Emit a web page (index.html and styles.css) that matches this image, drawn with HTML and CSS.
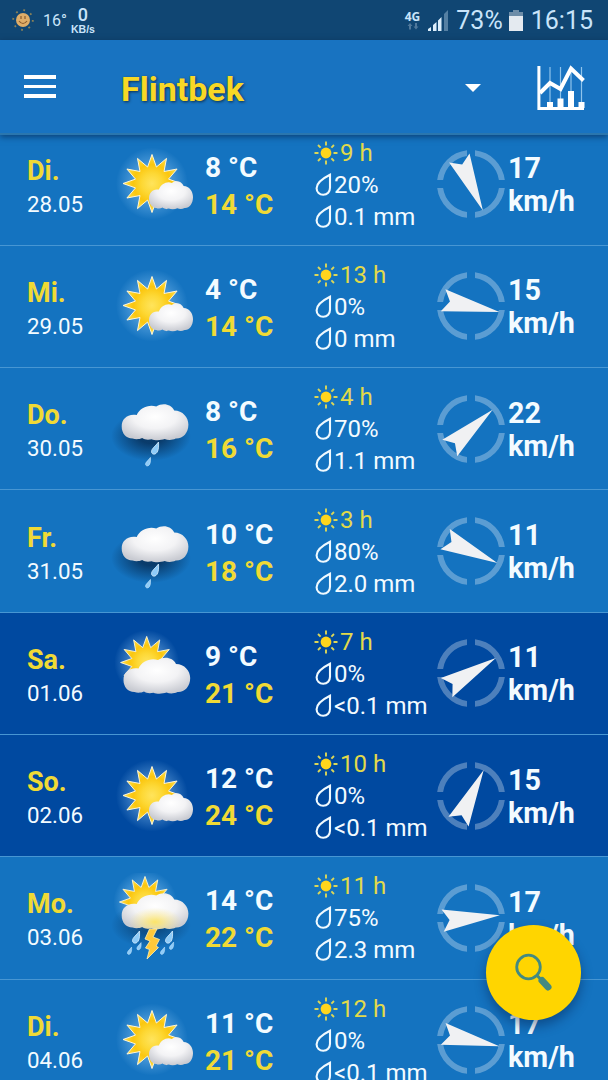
FILE: index.html
```html
<!DOCTYPE html>
<html lang="de">

<head>
    <meta charset="UTF-8">
    <meta name="viewport" content="width=device-width, initial-scale=1.0">
    <title>Flintbek</title>
    <link rel="stylesheet" href="styles.css">
</head>

<body>
    <!-- Shared icon shapes -->
    <svg class="defs" width="0" height="0" aria-hidden="true">
        <defs>
            <radialGradient id="sun-fill">
                <stop offset="0" stop-color="#ffe45c" />
                <stop offset="0.35" stop-color="#fdd835" />
                <stop offset="0.65" stop-color="#fbc60e" />
                <stop offset="1" stop-color="#ffe04a" />
            </radialGradient>
            <radialGradient id="glow-fill">
                <stop offset="0.5" stop-color="#9fd4ff" stop-opacity="0.4" />
                <stop offset="1" stop-color="#9fd4ff" stop-opacity="0" />
            </radialGradient>
            <radialGradient id="cloud-fill" cx="0.5" cy="0.35" r="0.65">
                <stop offset="0" stop-color="#ffffff" />
                <stop offset="0.5" stop-color="#f3f3f5" />
                <stop offset="1" stop-color="#c9cbd2" />
            </radialGradient>
            <radialGradient id="storm-fill" cx="0.5" cy="0.8" r="0.4">
                <stop offset="0" stop-color="#ffe55a" stop-opacity="0.9" />
                <stop offset="1" stop-color="#ffe98a" stop-opacity="0" />
            </radialGradient>
            <radialGradient id="shade-fill">
                <stop offset="0.3" stop-color="#06294f" stop-opacity="0.75" />
                <stop offset="1" stop-color="#06294f" stop-opacity="0" />
            </radialGradient>
            <g id="sun">
                <circle r="36" fill="url(#glow-fill)" />
                <polygon fill="url(#sun-fill)" stroke="#fff6d8" stroke-width="1"
                    points="29,0 16.5,4.4 25.1,14.5 12,12 14.5,25.1 4.4,16.5 0,29 -4.4,16.5 -14.5,25.1 -12,12 -25.1,14.5 -16.5,4.4 -29,0 -16.5,-4.4 -25.1,-14.5 -12,-12 -14.5,-25.1 -4.4,-16.5 0,-29 4.4,-16.5 14.5,-25.1 12,-12 25.1,-14.5 16.5,-4.4" />
            </g>
            <path id="cloud"
                d="M11,34.5 C4,34.5 0,29 0,22.5 C0,15 5.5,9.5 15,11 C18,4 27,0 34.5,2.5 C41,-1.5 49.5,0 52.5,6.5 C61,6.5 66.7,13.5 66.7,20.5 C66.7,29 61,35 54,34.6 C50,36.5 46,36.3 43,35 C39,36.5 33,36.5 30,35.2 C27,36 23,36 20.5,34 C17.5,35.5 13.5,35.5 11,34.5 Z" />
            <path id="drop" fill="#8ecbf8" stroke="#d5eeff" stroke-width="0.8"
                d="M3.5,-6.5 C3.8,-1 3.5,4 0,5.5 C-2.5,6.3 -4.5,4 -3,1.2 C-1.5,-1.5 1.5,-3.5 3.5,-6.5 Z" />
            <path id="ring-part" d="M4,-33.8 A34,34 0 0 1 33.8,-4 L27.9,-4 A28.2,28.2 0 0 0 4,-27.9 Z" />
            <path id="arrow" d="M29,0 L-28.5,-11.2 L-21.5,0 L-28.5,11.2 Z" />
            <symbol id="partly" viewBox="0 0 90 90">
                <use href="#sun" x="41" y="44.5" />
                <g transform="translate(38 42) scale(0.66 0.78)">
                    <use href="#cloud" fill="url(#cloud-fill)" />
                </g>
            </symbol>
            <symbol id="cloudy" viewBox="0 0 90 90">
                <g transform="translate(35.7 34.5) scale(0.9)">
                    <use href="#sun" />
                </g>
                <use href="#cloud" x="12.5" y="29.5" fill="url(#cloud-fill)" />
            </symbol>
            <symbol id="rain" viewBox="0 0 90 90">
                <ellipse cx="40" cy="52" rx="40" ry="25" fill="url(#shade-fill)" />
                <use href="#cloud" x="10.7" y="20" fill="url(#cloud-fill)" />
                <use href="#drop" x="44" y="64.5" />
                <g transform="translate(37 78) scale(0.7)">
                    <use href="#drop" />
                </g>
            </symbol>
            <symbol id="storm" viewBox="0 0 90 90">
                <g transform="translate(34 29) scale(0.88)">
                    <use href="#sun" />
                </g>
                <ellipse cx="40" cy="52" rx="40" ry="23" fill="url(#shade-fill)" opacity="0.7" />
                <use href="#cloud" x="10.7" y="20" fill="url(#cloud-fill)" />
                <use href="#cloud" x="10.7" y="20" fill="url(#storm-fill)" />
                <path fill="#ffc93a" stroke="#fff0b0" stroke-width="0.8"
                    d="M38.5,56 L46,56 L42,64 L48.5,66.5 L45,73 L47.5,74.5 L36,86 L38.5,76.5 L34.5,75 L39,68 L34,66 Z" />
                <use href="#drop" x="25" y="64.5" />
                <use href="#drop" x="58" y="64.5" />
                <g transform="translate(18.5 78) scale(0.6)">
                    <use href="#drop" />
                </g>
                <g transform="translate(28 73.5) scale(0.6)">
                    <use href="#drop" />
                </g>
                <g transform="translate(51.5 78) scale(0.6)">
                    <use href="#drop" />
                </g>
                <g transform="translate(60.5 73) scale(0.6)">
                    <use href="#drop" />
                </g>
            </symbol>
            <symbol id="ring" viewBox="-34 -34 68 68">
                <use href="#ring-part" />
                <use href="#ring-part" transform="rotate(90)" />
                <use href="#ring-part" transform="rotate(180)" />
                <use href="#ring-part" transform="rotate(270)" />
            </symbol>
            <symbol id="sun-small" viewBox="-12 -12 24 24">
                <circle r="5.4" fill="#ffd51c" />
                <path stroke="#dcd758" stroke-width="1.9"
                    d="M0,-7.5V-11.5M0,7.5V11.5M-7.5,0H-11.5M7.5,0H11.5M-5.4,-5.4L-8,-8M5.4,-5.4L8,-8M-5.4,5.4L-8,8M5.4,5.4L8,8" />
            </symbol>
            <symbol id="water" viewBox="0 0 18 24">
                <path fill="none" stroke="#f0faff" stroke-width="2.1"
                    d="M15,1.8 C9,4.8 1.6,9.5 1.6,15.2 C1.6,19.2 4.6,21.8 8.2,21.8 C12.4,21.8 15,18.8 15,14.8 Z" />
            </symbol>
        </defs>
    </svg>

    <div class="status-bar">
        <svg class="status-sun" viewBox="-12 -12 24 24">
            <circle r="9.8" fill="none" stroke="#8a8158" stroke-width="1.8" stroke-dasharray="1.8 5.9" />
            <circle r="7" fill="#dfad68" />
            <path d="M-2,-4V-1M2,-4V-1M-4,1Q0,6 4,1" fill="none" stroke="#8a5a2c" stroke-width="1.2" />
        </svg>
        <span class="status-temp">16°</span>
        <span class="status-net"><b>0</b><span>KB/s</span></span>
        <span class="status-4g">4G
            <svg viewBox="0 0 12 7">
                <path d="M3,0L5.5,3H4V6.5H2V3H0.5ZM9,6.5L6.5,3.5H8V0H10V3.5H11.5Z" fill="#50789b" />
            </svg>
        </span>
        <svg class="status-signal" viewBox="0 0 20 21">
            <path d="M0,21V19L3,17V21ZM5,21V15L8.5,12V21ZM10,21V10.5L13.5,7V21Z" fill="#dceefb" />
            <path d="M16,21V4L20,0V21Z" fill="#5580a3" />
        </svg>
        <span class="status-text">73%</span>
        <svg class="status-battery" viewBox="0 0 14 21">
            <path d="M0,2H4V0H10V2H14V6H0Z" fill="#6d8da8" />
            <path d="M0,6H14V21H0Z" fill="#e4eaf0" />
        </svg>
        <span class="status-text">16:15</span>
    </div>

    <header class="app-bar">
        <button class="menu-button" aria-label="Menü"><span></span><span></span><span></span></button>
        <h1>Flintbek</h1>
        <div class="arrow-down"></div>
        <svg class="chart-icon" viewBox="0 0 48 46">
            <path d="M13,2V38M23.5,2V36M34,5V38M44.5,2V38" stroke="#8fc4ec" stroke-width="1.2" />
            <path d="M1.9,1V43.5H47" fill="none" stroke="#fff" stroke-width="3" />
            <path d="M3,28L13,18L23.5,24L34,3.5L46.5,15.5" fill="none" stroke="#fff" stroke-width="4" />
            <path d="M10,37H16V43H10ZM20.5,33.5H26.5V43H20.5ZM31,26H37V43H31ZM41.5,37H47.5V43H41.5Z" fill="#fff" />
        </svg>
    </header>

    <main class="forecast">
        <section class="day">
            <div class="date"><b>Di.</b><span>28.05</span></div>
            <svg class="weather"><use href="#partly" /></svg>
            <div class="temp"><span>8 °C</span><span class="max">14 °C</span></div>
            <ul class="details">
                <li class="sunshine"><svg><use href="#sun-small" /></svg>9 h</li>
                <li><svg><use href="#water" /></svg>20%</li>
                <li><svg><use href="#water" /></svg>0.1 mm</li>
            </ul>
            <svg class="compass" viewBox="-34 -34 68 68">
                <use class="ring" href="#ring" x="-34" y="-34" width="68" height="68" />
                <use href="#arrow" transform="rotate(65.8)" />
            </svg>
            <div class="wind">17<br>km/h</div>
        </section>

        <section class="day">
            <div class="date"><b>Mi.</b><span>29.05</span></div>
            <svg class="weather"><use href="#partly" /></svg>
            <div class="temp"><span>4 °C</span><span class="max">14 °C</span></div>
            <ul class="details">
                <li class="sunshine"><svg><use href="#sun-small" /></svg>13 h</li>
                <li><svg><use href="#water" /></svg>0%</li>
                <li><svg><use href="#water" /></svg>0 mm</li>
            </ul>
            <svg class="compass" viewBox="-34 -34 68 68">
                <use class="ring" href="#ring" x="-34" y="-34" width="68" height="68" />
                <use href="#arrow" transform="rotate(11.8)" />
            </svg>
            <div class="wind">15<br>km/h</div>
        </section>

        <section class="day">
            <div class="date"><b>Do.</b><span>30.05</span></div>
            <svg class="weather"><use href="#rain" /></svg>
            <div class="temp"><span>8 °C</span><span class="max">16 °C</span></div>
            <ul class="details">
                <li class="sunshine"><svg><use href="#sun-small" /></svg>4 h</li>
                <li><svg><use href="#water" /></svg>70%</li>
                <li><svg><use href="#water" /></svg>1.1 mm</li>
            </ul>
            <svg class="compass" viewBox="-34 -34 68 68">
                <use class="ring" href="#ring" x="-34" y="-34" width="68" height="68" />
                <use href="#arrow" transform="rotate(-41.8)" />
            </svg>
            <div class="wind">22<br>km/h</div>
        </section>

        <section class="day">
            <div class="date"><b>Fr.</b><span>31.05</span></div>
            <svg class="weather"><use href="#rain" /></svg>
            <div class="temp"><span>10 °C</span><span class="max">18 °C</span></div>
            <ul class="details">
                <li class="sunshine"><svg><use href="#sun-small" /></svg>3 h</li>
                <li><svg><use href="#water" /></svg>80%</li>
                <li><svg><use href="#water" /></svg>2.0 mm</li>
            </ul>
            <svg class="compass" viewBox="-34 -34 68 68">
                <use class="ring" href="#ring" x="-34" y="-34" width="68" height="68" />
                <use href="#arrow" transform="rotate(24.6)" />
            </svg>
            <div class="wind">11<br>km/h</div>
        </section>

        <section class="day weekend">
            <div class="date"><b>Sa.</b><span>01.06</span></div>
            <svg class="weather"><use href="#cloudy" /></svg>
            <div class="temp"><span>9 °C</span><span class="max">21 °C</span></div>
            <ul class="details">
                <li class="sunshine"><svg><use href="#sun-small" /></svg>7 h</li>
                <li><svg><use href="#water" /></svg>0%</li>
                <li><svg><use href="#water" /></svg>&lt;0.1 mm</li>
            </ul>
            <svg class="compass" viewBox="-34 -34 68 68">
                <use class="ring" href="#ring" x="-34" y="-34" width="68" height="68" />
                <use href="#arrow" transform="rotate(-31)" />
            </svg>
            <div class="wind">11<br>km/h</div>
        </section>

        <section class="day weekend">
            <div class="date"><b>So.</b><span>02.06</span></div>
            <svg class="weather"><use href="#partly" /></svg>
            <div class="temp"><span>12 °C</span><span class="max">24 °C</span></div>
            <ul class="details">
                <li class="sunshine"><svg><use href="#sun-small" /></svg>10 h</li>
                <li><svg><use href="#water" /></svg>0%</li>
                <li><svg><use href="#water" /></svg>&lt;0.1 mm</li>
            </ul>
            <svg class="compass" viewBox="-34 -34 68 68">
                <use class="ring" href="#ring" x="-34" y="-34" width="68" height="68" />
                <use href="#arrow" transform="rotate(-64)" />
            </svg>
            <div class="wind">15<br>km/h</div>
        </section>

        <section class="day">
            <div class="date"><b>Mo.</b><span>03.06</span></div>
            <svg class="weather"><use href="#storm" /></svg>
            <div class="temp"><span>14 °C</span><span class="max">22 °C</span></div>
            <ul class="details">
                <li class="sunshine"><svg><use href="#sun-small" /></svg>11 h</li>
                <li><svg><use href="#water" /></svg>75%</li>
                <li><svg><use href="#water" /></svg>2.3 mm</li>
            </ul>
            <svg class="compass" viewBox="-34 -34 68 68">
                <use class="ring" href="#ring" x="-34" y="-34" width="68" height="68" />
                <use href="#arrow" transform="rotate(-5.4)" />
            </svg>
            <div class="wind">17<br>km/h</div>
        </section>

        <section class="day">
            <div class="date"><b>Di.</b><span>04.06</span></div>
            <svg class="weather"><use href="#partly" /></svg>
            <div class="temp"><span>11 °C</span><span class="max">21 °C</span></div>
            <ul class="details">
                <li class="sunshine"><svg><use href="#sun-small" /></svg>12 h</li>
                <li><svg><use href="#water" /></svg>0%</li>
                <li><svg><use href="#water" /></svg>&lt;0.1 mm</li>
            </ul>
            <svg class="compass" viewBox="-34 -34 68 68">
                <use class="ring" href="#ring" x="-34" y="-34" width="68" height="68" />
                <use href="#arrow" transform="rotate(12.4)" />
            </svg>
            <div class="wind">17<br>km/h</div>
        </section>
    </main>

    <button class="search-button" aria-label="Suche">
        <svg viewBox="0 0 40 40">
            <circle cx="14.5" cy="14" r="11.8" fill="none" stroke="#438a80" stroke-width="2.8" />
            <path d="M22.5,22L27,26.5" stroke="#438a80" stroke-width="3" />
            <path d="M28,27.5L34,34" stroke="#438a80" stroke-width="7" stroke-linecap="round" />
        </svg>
    </button>
</body>

</html>
```
FILE: styles.css
```css
body {
    position: relative;
    height: 1080px;
    margin: 0;
    overflow: hidden;
    background-color: #1473c0;
    color: #f3fbff;
    font-family: Roboto, "Liberation Sans", sans-serif;
}

button {
    padding: 0;
    border: 0;
    background: none;
}

.defs {
    position: absolute;
}

.status-bar {
    box-sizing: border-box;
    display: flex;
    align-items: center;
    height: 40px;
    padding: 0 15px 0 11px;
    background-color: #104673;
    color: #c9e4fa;
}

.status-sun {
    width: 24px;
    height: 24px;
}

.status-temp {
    width: 28px;
    margin-left: 8px;
    padding-top: 1px;
    font-size: 16px;
}

.status-net {
    display: flex;
    flex-direction: column;
    align-items: center;
    font-family: "Liberation Sans", sans-serif;
    font-size: 10.5px;
    font-weight: bold;
    line-height: 10px;
}

.status-net b {
    font-family: Roboto, sans-serif;
    font-size: 18px;
    font-weight: 500;
    line-height: 18px;
}

.status-4g {
    display: flex;
    flex-direction: column;
    align-items: center;
    margin-left: auto;
    font-family: "Open Sans", sans-serif;
    font-size: 12px;
    font-weight: bold;
    line-height: 13px;
}

.status-4g svg {
    width: 12px;
    height: 7px;
}

.status-signal {
    width: 20px;
    height: 21px;
    margin: 0 8px;
}

.status-text {
    padding-top: 1px;
    font-size: 25px;
}

.status-battery {
    width: 14px;
    height: 21px;
    margin: 0 8px 0 6px;
}

.app-bar {
    /* Keeps the bar above the list that scrolls under it */
    position: relative;
    z-index: 1;
    box-sizing: border-box;
    display: flex;
    align-items: center;
    height: 95px;
    padding: 0 23px 0 24px;
    border-bottom: 2px solid #2a76ae;
    background-color: #1873c1;
    box-shadow: 0 2px 6px rgba(0, 20, 50, 0.5);
}

.menu-button {
    display: flex;
    flex-direction: column;
    gap: 6px;
}

.menu-button span {
    width: 32px;
    height: 3.5px;
    background-color: #fff;
}

.app-bar h1 {
    margin: 4px 0 0 65px;
    color: #f8d825;
    font-size: 34px;
    font-weight: bold;
    text-shadow: 1px 1px 3px rgba(0, 0, 0, 0.6);
}

.arrow-down {
    margin: 2px 0 0 auto;
    border: 8px solid;
    border-bottom-width: 0;
    border-color: #fff transparent transparent;
}

.chart-icon {
    width: 48px;
    height: 46px;
    margin: 3px 0 0 56px;
}

.forecast {
    /* First day is partly scrolled under the app bar */
    margin-top: -11.5px;
}

.day {
    box-sizing: border-box;
    display: grid;
    grid-template-columns: 84px 94px 110px 121.5px 71.5px 1fr;
    align-items: center;
    height: 122.3px;
    padding-left: 27px;
    border-bottom: 1px solid #4796d3;
}

.weekend {
    background-color: #0049a0;
}

.date,
.temp {
    display: flex;
    flex-direction: column;
}

.date b {
    color: #f0da35;
    font-size: 27px;
    line-height: 33px;
}

.date {
    padding-top: 7px;
    font-size: 22.3px;
    line-height: 33px;
}

.weather {
    width: 90px;
    height: 90px;
}

.temp {
    padding-top: 3px;
    font-size: 28px;
    font-weight: bold;
    line-height: 37px;
}

.max {
    color: #f0da35;
}

.details {
    margin: 0;
    padding: 1px 0 0;
    list-style: none;
    font-size: 24px;
    line-height: 32px;
}

.details li {
    display: flex;
    align-items: center;
    white-space: nowrap;
}

.details svg {
    width: 18px;
    height: 24px;
    margin-right: 1px;
}

.details .sunshine {
    color: #e2da4a;
}

.details .sunshine svg {
    width: 24px;
    margin: 0 2px 0 -1px;
}

.compass {
    width: 68px;
    height: 68px;
    fill: #f0f1f3;
}

.ring {
    fill: #fff;
    opacity: 0.3;
}

.wind {
    padding-top: 2px;
    font-size: 28.7px;
    font-weight: bold;
    line-height: 33px;
}

.search-button {
    position: absolute;
    top: 925px;
    left: 486px;
    z-index: 2;
    display: flex;
    align-items: center;
    justify-content: center;
    width: 95px;
    height: 95px;
    border-radius: 50%;
    background-color: #ffd500;
    box-shadow: 0 6px 12px rgba(0, 20, 60, 0.4);
}

.search-button svg {
    width: 40px;
    height: 40px;
}
```
